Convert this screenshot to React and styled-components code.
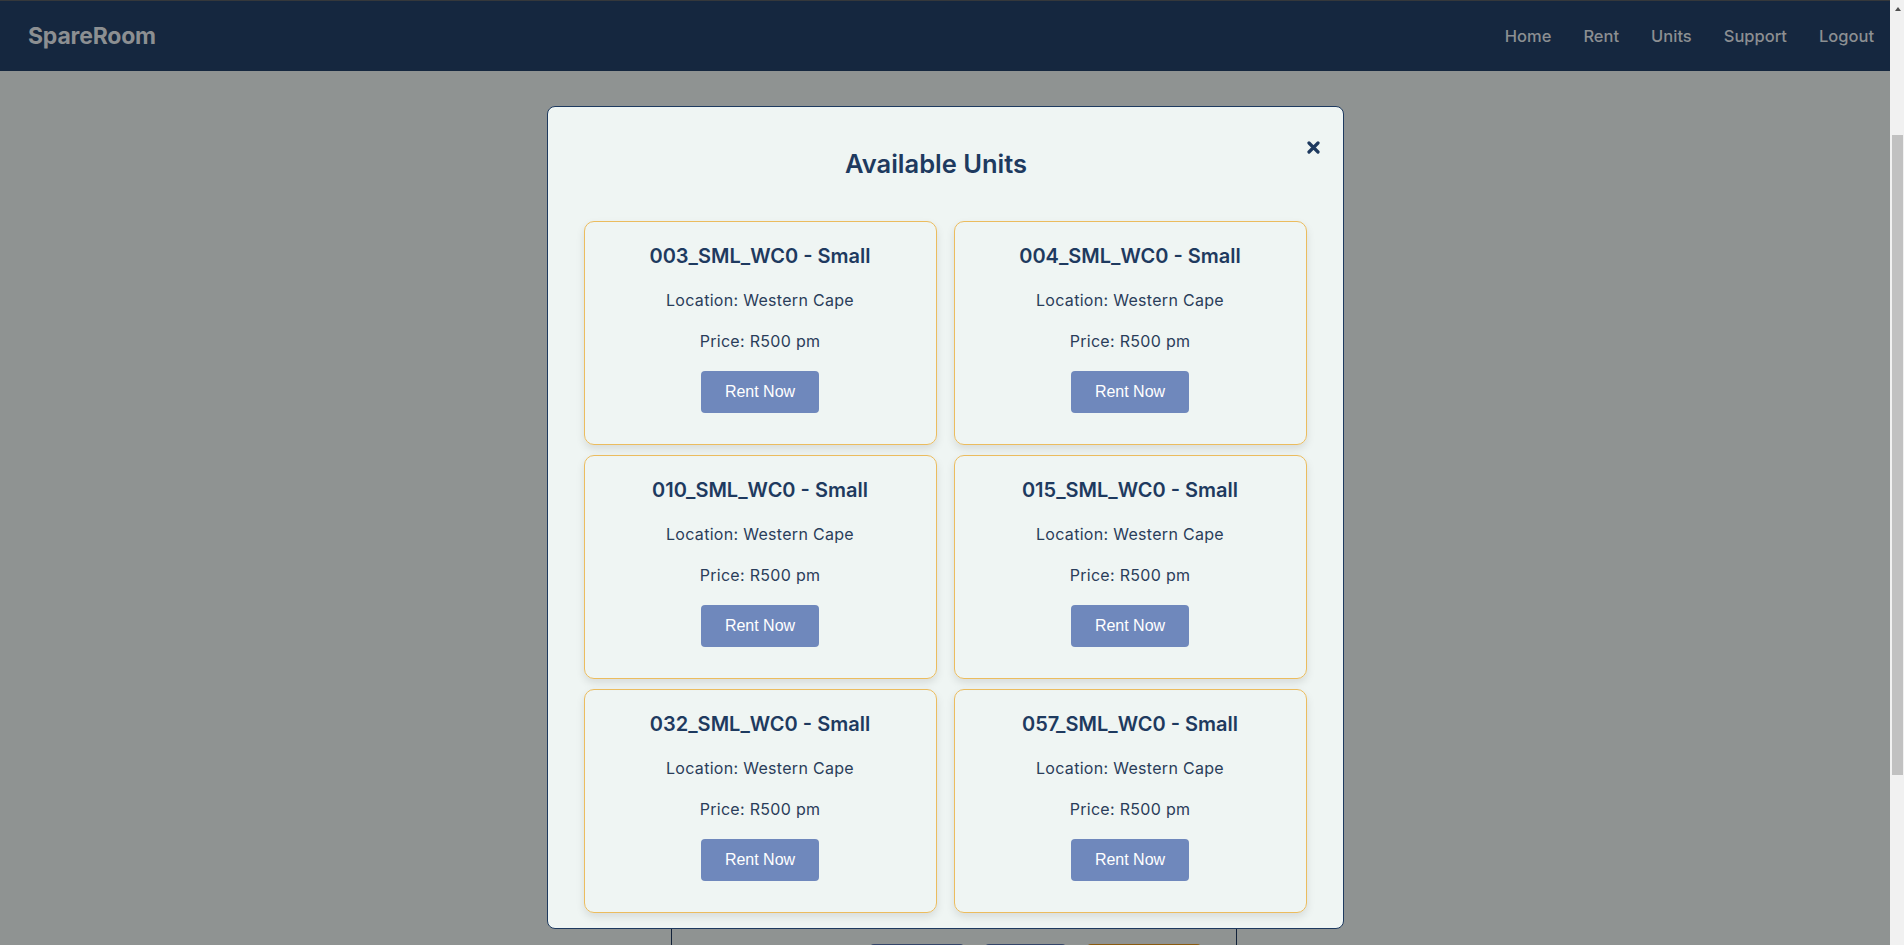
import React from 'react';
import styled, { createGlobalStyle } from 'styled-components';

const units = [
  { code: '003_SML_WC0', size: 'Small', location: 'Western Cape', price: 500 },
  { code: '004_SML_WC0', size: 'Small', location: 'Western Cape', price: 500 },
  { code: '010_SML_WC0', size: 'Small', location: 'Western Cape', price: 500 },
  { code: '015_SML_WC0', size: 'Small', location: 'Western Cape', price: 500 },
  { code: '032_SML_WC0', size: 'Small', location: 'Western Cape', price: 500 },
  { code: '057_SML_WC0', size: 'Small', location: 'Western Cape', price: 500 },
];

const navLinks = ['Home', 'Rent', 'Units', 'Support', 'Logout'];

const CloseIcon = () => (
  <svg width='13' height='13' viewBox='0 0 13 13' aria-hidden='true'>
    <path
      d='M2 2 L11 11 M11 2 L2 11'
      stroke='#1e3a5f'
      strokeWidth='3.2'
      strokeLinecap='round'
      fill='none'
    />
  </svg>
);

const UnitCard = ({ unit }) => (
  <S.Card>
    <S.CardTitle>
      {unit.code} - {unit.size}
    </S.CardTitle>
    <S.CardText>Location: {unit.location}</S.CardText>
    <S.CardText $last>Price: R{unit.price} pm</S.CardText>
    <S.RentButton type='button'>Rent Now</S.RentButton>
  </S.Card>
);

const App = () => (
  <>
    <GlobalStyle />
    <S.Screen>
      <S.Viewport>
        <S.Navbar>
          <S.Logo>SpareRoom</S.Logo>
          <S.NavLinks>
            {navLinks.map((link) => (
              <S.NavLink key={link} href='#'>
                {link}
              </S.NavLink>
            ))}
          </S.NavLinks>
        </S.Navbar>

        <S.Main>
          <S.Panel>
            <S.PanelBody />
            <S.ButtonRow>
              <S.PanelButton $color='#5874b0' $width={94} aria-label='Save' />
              <S.PanelButton $color='#5874b0' $width={81} aria-label='Edit' />
              <S.PanelButton $color='#e6961b' $width={114} aria-label='Browse' />
            </S.ButtonRow>
          </S.Panel>
        </S.Main>

        <S.Overlay>
          <S.Modal>
            <S.CloseButton type='button' aria-label='Close'>
              <CloseIcon />
            </S.CloseButton>
            <S.ModalTitle>Available Units</S.ModalTitle>
            <S.UnitGrid>
              {units.map((unit) => (
                <UnitCard key={unit.code} unit={unit} />
              ))}
            </S.UnitGrid>
          </S.Modal>
        </S.Overlay>
      </S.Viewport>

      <S.Scrollbar>
        <S.ScrollArrow />
        <S.ScrollThumb />
      </S.Scrollbar>
    </S.Screen>
  </>
);

export default App;

// Styled Components
const GlobalStyle = createGlobalStyle`
  body {
    margin: 0;
    overflow: hidden;
    background: #eff5f3;
    font-family: Inter, 'Open Sans', sans-serif;
  }

  * {
    box-sizing: border-box;
  }
`;

const S = {};

S.Screen = styled.div`
  display: flex;
  height: 100vh;
`;

S.Viewport = styled.div`
  position: relative;
  flex: 1;
  overflow: hidden;
  display: flex;
  flex-direction: column;
`;

S.Scrollbar = styled.div`
  width: 14px;
  flex-shrink: 0;
  background: #f1f1f1;
  display: flex;
  flex-direction: column;
  align-items: flex-end;
  padding: 0 1px 0 2px;
`;

S.ScrollArrow = styled.div`
  align-self: center;
  margin: 7px 0 0 1px;
  width: 0;
  height: 0;
  border-left: 3.5px solid transparent;
  border-right: 3.5px solid transparent;
  border-bottom: 4px solid #505050;
`;

S.ScrollThumb = styled.div`
  width: 100%;
  height: 640px;
  margin-top: 124px;
  background: #c1c1c1;
`;

S.Navbar = styled.nav`
  position: relative;
  z-index: 10;
  flex-shrink: 0;
  height: 71px;
  border-top: 1px solid #35383b;
  background: #15273f;
  display: flex;
  align-items: center;
  justify-content: space-between;
  padding: 0 16px 0 28px;
`;

S.Logo = styled.div`
  font-size: 23px;
  font-weight: 700;
  color: #8c8f92;
  letter-spacing: -0.2px;
`;

S.NavLinks = styled.div`
  display: flex;
  gap: 32px;
`;

S.NavLink = styled.a`
  font-size: 16.5px;
  font-weight: 500;
  color: #8c8f92;
  text-decoration: none;
`;

S.Main = styled.main`
  display: flex;
  justify-content: center;
  padding: 229px 0 0 18px;
`;

S.Panel = styled.section`
  width: 566px;
  border: 1px solid #1e3a5f;
  padding: 24px;
  display: flex;
  flex-direction: column;
`;

S.PanelBody = styled.div`
  height: 619px;
`;

S.ButtonRow = styled.div`
  display: flex;
  justify-content: center;
  gap: 21px;
  padding-left: 162px;
`;

S.PanelButton = styled.button`
  width: ${(p) => p.$width}px;
  height: 40px;
  flex-shrink: 0;
  border: none;
  border-radius: 4px;
  background: ${(p) => p.$color};
`;

S.Overlay = styled.div`
  position: absolute;
  inset: 0;
  z-index: 5;
  background: rgba(0, 0, 0, 0.4);
  display: flex;
  justify-content: center;
  align-items: flex-start;
  padding-top: 106px;
`;

S.Modal = styled.div`
  position: relative;
  width: 797px;
  background: #eff5f3;
  border: 1px solid #1e3a5f;
  border-radius: 8px;
  padding: 41px 36px 15px;
`;

S.CloseButton = styled.button`
  position: absolute;
  top: 34px;
  right: 23px;
  width: 13px;
  height: 13px;
  padding: 0;
  border: none;
  background: none;
  display: flex;
  cursor: pointer;
`;

S.ModalTitle = styled.h2`
  margin: 0 0 41px;
  padding-right: 18px;
  text-align: center;
  font-size: 25.5px;
  line-height: 32px;
  font-weight: 600;
  color: #1e3a5f;
`;

S.UnitGrid = styled.div`
  display: grid;
  grid-template-columns: repeat(2, 1fr);
  gap: 10.5px 17px;
`;

S.Card = styled.div`
  height: 223.5px;
  border: 1px solid #ebbc5e;
  border-radius: 10px;
  box-shadow: 0 4px 8px rgba(0, 0, 0, 0.1);
  padding: 20px 20px 0;
  display: flex;
  flex-direction: column;
  align-items: center;
  text-align: center;
  color: #2a3d5a;
`;

S.CardTitle = styled.h3`
  margin: 0 0 18px;
  font-size: 20px;
  line-height: 28px;
  font-weight: 600;
  color: #1e3a5f;
`;

S.CardText = styled.p`
  margin: 0 0 ${(p) => (p.$last ? 18 : 17)}px;
  font-size: 16px;
  line-height: 24px;
  letter-spacing: 0.3px;
`;

S.RentButton = styled.button`
  width: 118px;
  height: 42px;
  border: none;
  border-radius: 4px;
  background: #6f88bc;
  color: #fff;
  font-family: 'Liberation Sans', Arial, sans-serif;
  font-size: 16px;
  cursor: pointer;
`;
